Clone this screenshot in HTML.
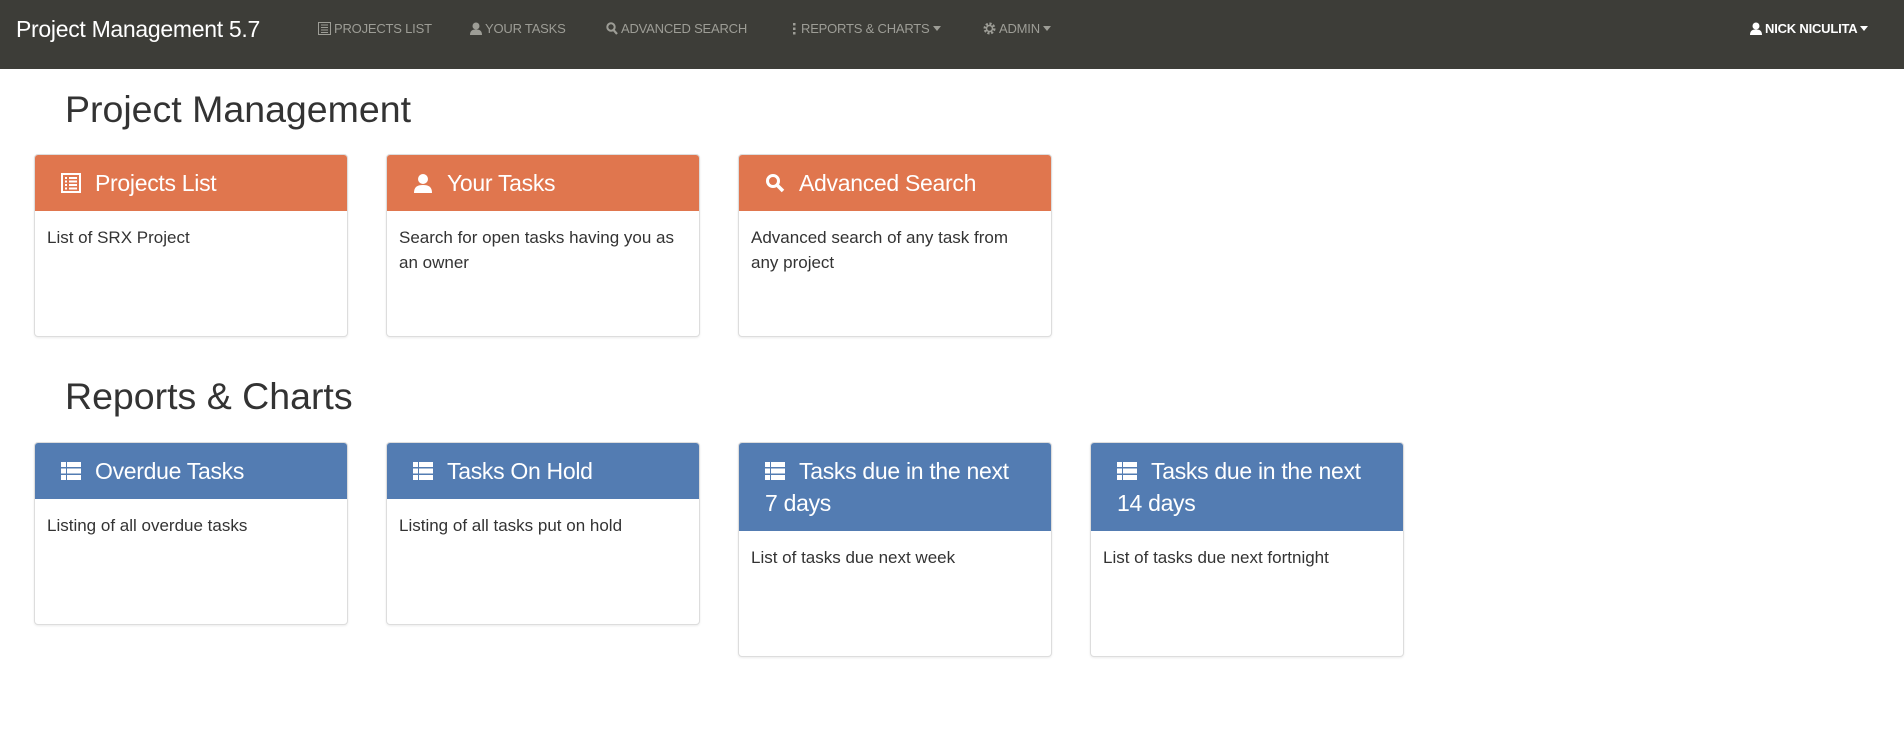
<!DOCTYPE html>
<html><head><meta charset="utf-8"><style>
*{box-sizing:border-box;margin:0;padding:0}
body{width:1904px;height:736px;background:#fff;font-family:"Liberation Sans",sans-serif;color:#333;position:relative;overflow:hidden}
.nav{position:absolute;left:0;top:0;width:1904px;height:69px;background:#3d3d38}
.brand{position:absolute;left:16px;top:14px;font-size:23px;color:#fff;line-height:30px;letter-spacing:-0.3px}
.ni{position:absolute;top:21px;font-size:13px;color:#9d9d96;line-height:16px;white-space:nowrap;letter-spacing:-0.2px}
.ni svg{vertical-align:-2px;margin-right:3px}
.caret{display:inline-block;border-left:4px solid transparent;border-right:4px solid transparent;border-top:5px solid currentColor;vertical-align:2px;margin-left:3px}
h1{position:absolute;left:65px;font-weight:normal;font-size:37.5px;color:#333;line-height:40px}
.card{position:absolute;width:314px;border:1px solid #ddd;border-radius:4px;background:#fff;box-shadow:0 1px 2px rgba(0,0,0,.08)}
.hd{padding:12px 10px 12px 26px;font-size:23px;line-height:32px;color:#fff;border-radius:3px 3px 0 0;white-space:nowrap;letter-spacing:-0.3px}
.hd svg{vertical-align:-2px;margin-right:14px}
.o{background:#e0764e}.b{background:#537cb2}
.bd{padding:15px 12px 12px;font-size:17px;line-height:24.5px;color:#333;height:125px}
</style></head><body>
<div class="nav">
<div class="brand">Project Management 5.7</div>
<div class="ni" style="left:318px"><svg width="13" height="13" viewBox="0 0 13 13"><rect x="0.5" y="0.5" width="12" height="12" fill="none" stroke="#9d9d96"/><path d="M3 3h7M3 5.5h7M3 8h7M3 10.5h7" stroke="#9d9d96"/></svg>PROJECTS LIST</div>
<div class="ni" style="left:470px"><svg width="12" height="13" viewBox="0 0 12 13"><circle cx="6" cy="4" r="3.5" fill="#9d9d96"/><path d="M0 13c0-4 2-5.5 6-5.5s6 1.5 6 5.5z" fill="#9d9d96"/></svg>YOUR TASKS</div>
<div class="ni" style="left:606px"><svg width="12" height="13" viewBox="0 0 12 13"><circle cx="5" cy="5" r="3.7" fill="none" stroke="#9d9d96" stroke-width="2"/><path d="M7.5 8l3.5 4" stroke="#9d9d96" stroke-width="2.2"/></svg>ADVANCED SEARCH</div>
<div class="ni" style="left:790px"><svg width="8" height="13" viewBox="0 0 8 13"><rect x="3" y="1" width="2.5" height="2.5" fill="#9d9d96"/><rect x="3" y="5.5" width="2.5" height="2.5" fill="#9d9d96"/><rect x="3" y="10" width="2.5" height="2.5" fill="#9d9d96"/></svg>REPORTS &amp; CHARTS<span class="caret"></span></div>
<div class="ni" style="left:983px"><svg width="13" height="13" viewBox="0 0 13 13"><circle cx="6.5" cy="6.5" r="4.5" fill="none" stroke="#9d9d96" stroke-width="3" stroke-dasharray="2 1.5"/><circle cx="6.5" cy="6.5" r="3" fill="none" stroke="#9d9d96" stroke-width="1.5"/></svg>ADMIN<span class="caret"></span></div>
<div class="ni" style="left:1750px;color:#fff;font-weight:bold"><svg width="12" height="13" viewBox="0 0 12 13"><circle cx="6" cy="4" r="3.5" fill="#fff"/><path d="M0 13c0-4 2-5.5 6-5.5s6 1.5 6 5.5z" fill="#fff"/></svg>NICK NICULITA<span class="caret"></span></div>
</div>

<h1 style="top:89px">Project Management</h1>
<div class="card" style="left:34px;top:154px"><div class="hd o"><svg width="20" height="20" viewBox="0 0 20 20"><rect x="1" y="1" width="18" height="18" fill="none" stroke="#fff" stroke-width="2"/><path d="M4 5h2M8 5h8M4 8.5h2M8 8.5h8M4 12h2M8 12h8M4 15.5h2M8 15.5h8" stroke="#fff" stroke-width="2"/></svg>Projects List</div><div class="bd">List of SRX Project</div></div>
<div class="card" style="left:386px;top:154px"><div class="hd o"><svg width="20" height="20" viewBox="0 0 20 20"><circle cx="10" cy="6" r="5" fill="#fff"/><path d="M1 20c0-6 3-8 9-8s9 2 9 8z" fill="#fff"/></svg>Your Tasks</div><div class="bd">Search for open tasks having you as an owner</div></div>
<div class="card" style="left:738px;top:154px"><div class="hd o"><svg width="20" height="20" viewBox="0 0 20 20"><circle cx="8" cy="8" r="5.5" fill="none" stroke="#fff" stroke-width="3"/><path d="M12 12l6 6" stroke="#fff" stroke-width="3.5"/></svg>Advanced Search</div><div class="bd">Advanced search of any task from any project</div></div>

<h1 style="top:376px">Reports &amp; Charts</h1>
<div class="card" style="left:34px;top:442px"><div class="hd b"><svg width="20" height="20" viewBox="0 0 20 20" fill="#fff"><rect x="0" y="1" width="5" height="5"/><rect x="6" y="1" width="14" height="5"/><rect x="0" y="7.5" width="5" height="5"/><rect x="6" y="7.5" width="14" height="5"/><rect x="0" y="14" width="5" height="5"/><rect x="6" y="14" width="14" height="5"/></svg>Overdue Tasks</div><div class="bd">Listing of all overdue tasks</div></div>
<div class="card" style="left:386px;top:442px"><div class="hd b"><svg width="20" height="20" viewBox="0 0 20 20" fill="#fff"><rect x="0" y="1" width="5" height="5"/><rect x="6" y="1" width="14" height="5"/><rect x="0" y="7.5" width="5" height="5"/><rect x="6" y="7.5" width="14" height="5"/><rect x="0" y="14" width="5" height="5"/><rect x="6" y="14" width="14" height="5"/></svg>Tasks On Hold</div><div class="bd">Listing of all tasks put on hold</div></div>
<div class="card" style="left:738px;top:442px"><div class="hd b"><svg width="20" height="20" viewBox="0 0 20 20" fill="#fff"><rect x="0" y="1" width="5" height="5"/><rect x="6" y="1" width="14" height="5"/><rect x="0" y="7.5" width="5" height="5"/><rect x="6" y="7.5" width="14" height="5"/><rect x="0" y="14" width="5" height="5"/><rect x="6" y="14" width="14" height="5"/></svg>Tasks due in the next<br>7 days</div><div class="bd">List of tasks due next week</div></div>
<div class="card" style="left:1090px;top:442px"><div class="hd b"><svg width="20" height="20" viewBox="0 0 20 20" fill="#fff"><rect x="0" y="1" width="5" height="5"/><rect x="6" y="1" width="14" height="5"/><rect x="0" y="7.5" width="5" height="5"/><rect x="6" y="7.5" width="14" height="5"/><rect x="0" y="14" width="5" height="5"/><rect x="6" y="14" width="14" height="5"/></svg>Tasks due in the next<br>14 days</div><div class="bd">List of tasks due next fortnight</div></div>
</body></html>
